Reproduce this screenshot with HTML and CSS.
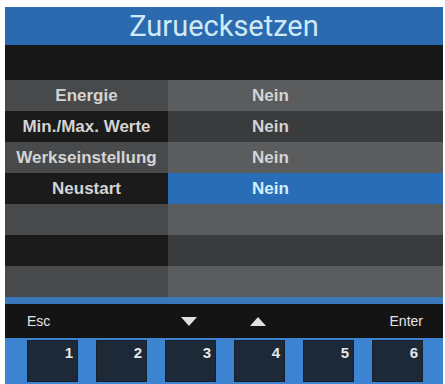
FILE: index.html
```html
<!DOCTYPE html>
<html lang="de">
<head>
<meta charset="utf-8">
<title>Zuruecksetzen</title>
<link rel="stylesheet" href="styles.css">
</head>
<body>
<div class="screen">
  <div class="title">Zuruecksetzen</div>
  <div class="band"></div>
  <div class="rows">
    <div class="cell label light">Energie</div>
    <div class="cell value light">Nein</div>
    <div class="cell label dark">Min./Max. Werte</div>
    <div class="cell value dark">Nein</div>
    <div class="cell label light">Werkseinstellung</div>
    <div class="cell value light">Nein</div>
    <div class="cell label dark">Neustart</div>
    <div class="cell value selected">Nein</div>
    <div class="cell label light"></div>
    <div class="cell value light"></div>
    <div class="cell label dark"></div>
    <div class="cell value dark"></div>
    <div class="cell label light"></div>
    <div class="cell value light"></div>
  </div>
  <div class="sep"></div>
  <div class="softkeys">
    <span class="key-left">Esc</span>
    <span></span>
    <span class="key-center"><span class="tri down"></span></span>
    <span class="key-center"><span class="tri up"></span></span>
    <span></span>
    <span class="key-right">Enter</span>
  </div>
  <div class="buttons">
    <div class="btn">1</div>
    <div class="btn">2</div>
    <div class="btn">3</div>
    <div class="btn">4</div>
    <div class="btn">5</div>
    <div class="btn">6</div>
  </div>
</div>
</body>
</html>
```
FILE: styles.css
```css
html, body {
  margin: 0;
  padding: 0;
  background: #ffffff;
}

body {
  font-family: "Liberation Sans", Arial, sans-serif;
}

.screen {
  margin: 7px 0 0 5px;
  width: 438px;
  height: 377px;
  background: #151515;
  display: flex;
  flex-direction: column;
  overflow: hidden;
}

.title {
  height: 38px;
  background: #2b6aae;
  color: #cfe9f7;
  font-family: Roboto, "Liberation Sans", sans-serif;
  font-size: 29px;
  line-height: 38px;
  text-align: center;
}

.band {
  height: 35px;
  background: #171717;
}

.rows {
  display: grid;
  grid-template-columns: 163px 1fr;
  grid-auto-rows: 31px;
}

.cell {
  font-size: 17px;
  font-weight: bold;
  color: #d4d4d4;
  line-height: 31px;
  white-space: nowrap;
}

.label {
  text-align: center;
}

.value {
  padding-left: 84px;
}

.label.light { background: #48494a; }
.label.dark  { background: #1b1b1b; }
.value.light { background: #5a5c5e; }
.value.dark  { background: #3a3b3d; }
.value.selected {
  background: #2a6db7;
  color: #d6eefa;
}

.sep {
  height: 7px;
  background: #3a78bb;
}

.softkeys {
  height: 34px;
  background: #141414;
  display: grid;
  grid-template-columns: repeat(6, 51px);
  column-gap: 18px;
  padding: 0 18px 0 22px;
  align-items: center;
  color: #e4e4e4;
  font-size: 14px;
}

.key-left { justify-self: start; }
.key-right { justify-self: end; }
.key-center {
  justify-self: center;
  display: flex;
  transform: translateX(-2px);
}

.tri {
  width: 0;
  height: 0;
  border-left: 8px solid transparent;
  border-right: 8px solid transparent;
}
.tri.down { border-top: 9px solid #e0e0e0; }
.tri.up { border-bottom: 9px solid #e0e0e0; }

.buttons {
  flex: 1;
  background: #3c83d2;
  display: flex;
  gap: 18px;
  padding: 2px 18px 0 22px;
}

.btn {
  width: 51px;
  height: 42px;
  box-sizing: border-box;
  background: #1d2937;
  border: 1px solid #16202b;
  color: #e6e6e6;
  font-size: 15px;
  font-weight: bold;
  text-align: right;
  padding: 3px 4px 0 0;
}
```
